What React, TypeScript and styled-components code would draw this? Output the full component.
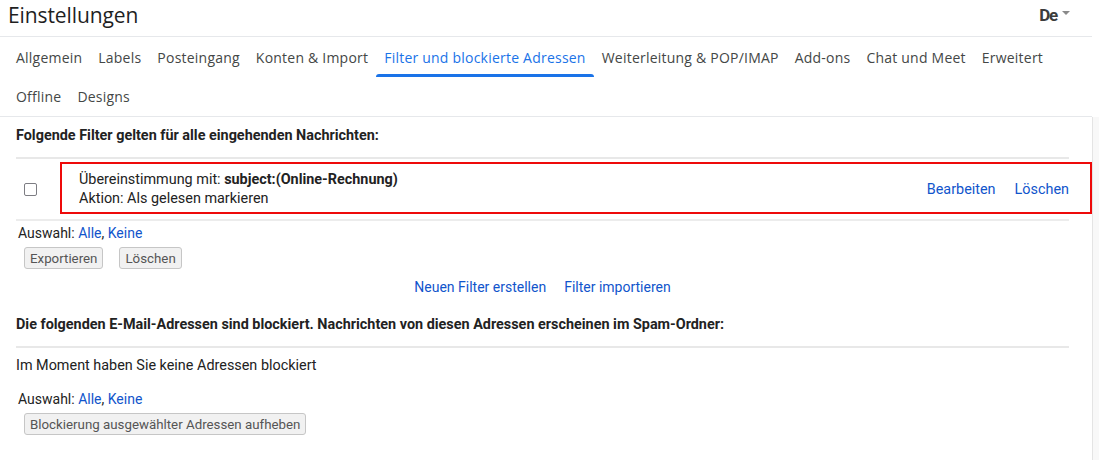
import styled, { createGlobalStyle } from 'styled-components';

const GlobalStyle = createGlobalStyle`
  html, body {
    margin: 0;
    padding: 0;
    background: #ffffff;
  }

  body {
    font-family: Roboto, "Liberation Sans", Arial, sans-serif;
    color: #222222;
    overflow: hidden;
  }
`;

const topTabs = [
  'Allgemein',
  'Labels',
  'Posteingang',
  'Konten & Import',
  'Filter und blockierte Adressen',
  'Weiterleitung & POP/IMAP',
  'Add-ons',
  'Chat und Meet',
  'Erweitert',
];

const bottomTabs = ['Offline', 'Designs'];

const ACTIVE_TAB = 'Filter und blockierte Adressen';

const Page = styled.div`
  width: 1099px;
  height: 460px;
  display: flex;
  flex-direction: column;
`;

const Top = styled.div`
  width: 1092px;
  border-bottom: 1px solid #e6e8eb;
`;

const Header = styled.header`
  height: 37px;
  display: flex;
  align-items: center;
  justify-content: space-between;
  padding: 0 22px 7px 8px;
  box-sizing: border-box;
  border-bottom: 1px solid #e6e8eb;

  h1 {
    margin: 0;
    font-family: "Open Sans", Roboto, sans-serif;
    font-size: 21px;
    font-weight: 400;
    letter-spacing: -0.1px;
    color: #1f1f1f;
  }
`;

const LangPicker = styled.div`
  display: flex;
  align-items: center;
  gap: 5px;
  color: #3c3c3c;

  .code {
    font-family: Roboto, sans-serif;
    font-size: 17px;
    font-weight: 700;
    letter-spacing: -1.3px;
  }

  .caret {
    width: 0;
    height: 0;
    margin-top: -3px;
    border-left: 4px solid transparent;
    border-right: 4px solid transparent;
    border-top: 4px solid #8a8a8a;
  }
`;

const TabRow = styled.nav<{ $height: number }>`
  display: flex;
  height: ${({ $height }) => $height}px;
  padding-left: 8px;
`;

const Tab = styled.div<{ $active?: boolean }>`
  position: relative;
  display: flex;
  align-items: center;
  padding: 0 8px;
  font-family: "Open Sans", Roboto, sans-serif;
  font-size: 14px;
  letter-spacing: 0.22px;
  white-space: nowrap;
  color: ${({ $active }) => ($active ? '#1a73e8' : '#444746')};

  &::after {
    content: '';
    display: ${({ $active }) => ($active ? 'block' : 'none')};
    position: absolute;
    left: 0;
    right: 0;
    bottom: 0;
    height: 3px;
    border-radius: 3px 3px 0 0;
    background: #1a73e8;
  }
`;

const Body = styled.div`
  flex: 1;
  display: flex;
`;

const Content = styled.main`
  flex: 1;
  padding: 0 23px 0 16px;
  font-size: 14px;
`;

const ScrollTrack = styled.div`
  width: 6px;
  background: #f8f8f8;
  border-left: 1px solid #e4e4e4;
`;

const SectionHeading = styled.div<{ $top: number }>`
  margin-top: ${({ $top }) => $top}px;
  padding-bottom: 12px;
  font-weight: 700;
  font-size: 14.4px;
  line-height: 18px;
  color: #222222;
  border-bottom: 2px solid #e8e8e8;
`;

const FilterRow = styled.div`
  position: relative;
  height: 60px;
  display: flex;
  align-items: center;
  border-bottom: 2px solid #ececec;
`;

const Highlight = styled.div`
  position: absolute;
  left: 44px;
  right: -23px;
  top: 3px;
  bottom: 5px;
  border: 2px solid #ee0a0a;
  pointer-events: none;
`;

const CheckBox = styled.span`
  width: 11px;
  height: 11px;
  margin-left: 8px;
  border: 1.5px solid #7d7d83;
  border-radius: 2px;
`;

const FilterText = styled.div`
  flex: 1;
  padding-left: 42px;
  font-size: 14.4px;
  line-height: 19px;
  color: #222222;

  b {
    font-weight: 700;
  }
`;

const Actions = styled.div`
  display: flex;
  gap: 19px;
  font-size: 14.4px;
`;

const Link = styled.a`
  color: #1155cc;
  text-decoration: none;
  cursor: pointer;
`;

const Selection = styled.div<{ $top: number }>`
  margin-top: ${({ $top }) => $top}px;
  padding-left: 2px;
  line-height: 16px;
`;

const ButtonRow = styled.div`
  display: flex;
  gap: 16px;
  margin-top: 6px;
  padding-left: 8px;
`;

const GrayButton = styled.button`
  height: 22px;
  padding: 0 5px;
  font-family: Roboto, "Liberation Sans", sans-serif;
  font-size: 13.3px;
  color: #555555;
  background: #f1f1f1;
  border: 1px solid #c6c6c6;
  border-radius: 3px;
`;

const CenterLinks = styled.div`
  display: flex;
  justify-content: center;
  gap: 18px;
  margin-top: 10px;
  line-height: 16px;
`;

const Note = styled.div`
  margin-top: 10px;
  font-size: 14.4px;
  line-height: 16px;
`;

const Selector = ({ top }: { top: number }) => (
  <Selection $top={top}>
    Auswahl: <Link>Alle</Link>, <Link>Keine</Link>
  </Selection>
);

export default function App() {
  return (
    <Page>
      <GlobalStyle />
      <Top>
        <Header>
          <h1>Einstellungen</h1>
          <LangPicker>
            <span className="code">De</span>
            <span className="caret" />
          </LangPicker>
        </Header>
        <TabRow $height={40}>
          {topTabs.map((tab) => (
            <Tab key={tab} $active={tab === ACTIVE_TAB}>{tab}</Tab>
          ))}
        </TabRow>
        <TabRow $height={39}>
          {bottomTabs.map((tab) => (
            <Tab key={tab}>{tab}</Tab>
          ))}
        </TabRow>
      </Top>
      <Body>
        <Content>
          <SectionHeading $top={10}>
            Folgende Filter gelten für alle eingehenden Nachrichten:
          </SectionHeading>
          <FilterRow>
            <CheckBox />
            <FilterText>
              <div>Übereinstimmung mit: <b>subject:(Online-Rechnung)</b></div>
              <div>Aktion: Als gelesen markieren</div>
            </FilterText>
            <Actions>
              <Link>Bearbeiten</Link>
              <Link>Löschen</Link>
            </Actions>
            <Highlight />
          </FilterRow>
          <Selector top={4} />
          <ButtonRow>
            <GrayButton>Exportieren</GrayButton>
            <GrayButton>Löschen</GrayButton>
          </ButtonRow>
          <CenterLinks>
            <Link>Neuen Filter erstellen</Link>
            <Link>Filter importieren</Link>
          </CenterLinks>
          <SectionHeading $top={21}>
            Die folgenden E-Mail-Adressen sind blockiert. Nachrichten von diesen Adressen erscheinen im Spam-Ordner:
          </SectionHeading>
          <Note>Im Moment haben Sie keine Adressen blockiert</Note>
          <Selector top={17} />
          <ButtonRow>
            <GrayButton>Blockierung ausgewählter Adressen aufheben</GrayButton>
          </ButtonRow>
        </Content>
        <ScrollTrack />
      </Body>
    </Page>
  );
}
